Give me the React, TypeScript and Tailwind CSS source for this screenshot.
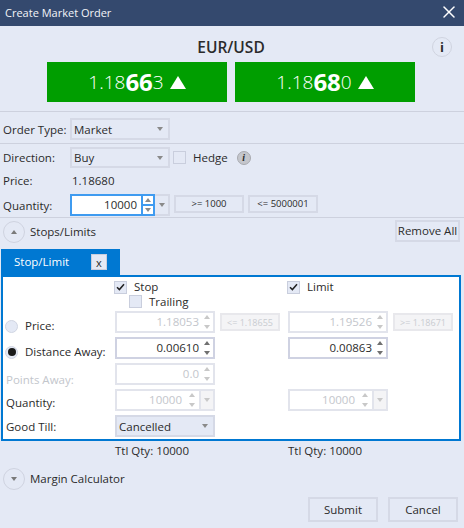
import React from 'react';
import { X } from 'lucide-react';

const Up = ({ className = 'border-b-[#8a8a8a]' }: { className?: string }) => (
  <span className={`block w-0 h-0 border-x-[3.5px] border-x-transparent border-b-[4px] ${className}`} />
);
const Down = ({ className = 'border-t-[#8a8a8a]' }: { className?: string }) => (
  <span className={`block w-0 h-0 border-x-[3.5px] border-x-transparent border-t-[4px] ${className}`} />
);

const Select = ({ value, height = 'h-[22px]' }: { value: string; height?: string }) => (
  <div className={`w-[100px] ${height} shrink-0 border-2 border-[#d5d9e6] flex items-center justify-between pl-[2px] pr-[5px] text-[#2b2b2b]`}>
    <span className="pt-[1px]">{value}</span>
    <Down className="border-t-[#8a8a8a]" />
  </div>
);

const Check = ({ on, className = '' }: { on?: boolean; className?: string }) => (
  <span className={`w-[13px] h-[13px] shrink-0 border border-[#c9cedd] bg-[#e4e9f5] flex items-center justify-center ${className}`}>
    {on && (
      <svg width="9" height="8" viewBox="0 0 9 8" fill="none">
        <path d="M1 4.2 L3.4 6.6 L8 1.2" stroke="#222" strokeWidth="1.5" />
      </svg>
    )}
  </span>
);

const Radio = ({ on }: { on?: boolean }) => (
  <span className="w-[13px] h-[13px] shrink-0 rounded-full border border-[#d0d5e2] bg-[#e4e9f5] flex items-center justify-center">
    {on && <span className="w-[8px] h-[8px] rounded-full bg-[#1a1a1a]" />}
  </span>
);

const Spin = ({ value, disabled }: { value: string; disabled?: boolean }) => (
  <div className={`w-[100px] h-[22px] shrink-0 border-2 flex items-center justify-end pr-[1px] gap-[5px] ${disabled ? 'border-[#e2e4ec] text-[#c3c6cc]' : 'border-[#cfd2e2] text-[#2b2b2b]'}`}>
    <span>{value}</span>
    <span className="flex flex-col gap-[6px] w-[8px]">
      <Up className={disabled ? 'border-b-[#c8c8c8]' : 'border-b-[#707070]'} />
      <Down className={disabled ? 'border-t-[#c8c8c8]' : 'border-t-[#707070]'} />
    </span>
  </div>
);

const QtySpin = () => (
  <div className="w-[100px] h-[22px] shrink-0 border-2 border-[#e2e4ec] flex text-[#c3c6cc]">
    <div className="w-[82px] flex items-center justify-end pr-[2px] gap-[7px]">
      <span>10000</span>
      <span className="flex flex-col gap-[6px] w-[8px]">
        <Up className="border-b-[#c8c8c8]" />
        <Down className="border-t-[#c8c8c8]" />
      </span>
    </div>
    <div className="flex-1 bg-[#f4f4f6] border-l-2 border-[#e2e4ec] flex items-center justify-center">
      <span className="block w-0 h-0 border-x-[3px] border-x-transparent border-t-[4px] border-t-[#c8c8c8]" />
    </div>
  </div>
);

const Limit = ({ text }: { text: string }) => (
  <div className="w-[60px] h-[18px] shrink-0 border-2 border-[#e8e8ec] bg-[#f4f4f6] text-[#c9ccd1] text-[9px] flex items-center justify-center whitespace-nowrap overflow-hidden">
    {text}
  </div>
);

const Round = ({ up }: { up?: boolean }) => (
  <span className="w-[22px] h-[22px] shrink-0 rounded-full border border-[#cfd3e0] flex items-center justify-center">
    {up ? <Up className="border-b-[#7a7a7a]" /> : <Down className="border-t-[#7a7a7a]" />}
  </span>
);

const Quote = ({ a, b, c }: { a: string; b: string; c: string }) => (
  <div className="w-[180px] h-[40px] bg-[#009e00] text-white flex items-center justify-center text-[19px] font-light">
    <span>{a}</span>
    <span className="font-bold text-[24px] leading-none">{b}</span>
    <span>{c}</span>
    <span className="ml-[6px] w-0 h-0 border-x-[8px] border-x-transparent border-b-[13px] border-b-white" />
  </div>
);

const App = () => {
  return (
    <div className="w-[464px] h-[528px] bg-[#e4e9f5] text-[#2b2b2b] text-[11.5px] leading-none overflow-hidden font-['Open_Sans','Noto_Sans',sans-serif]">
      {/* title */}
      <div className="h-[26px] bg-[#34496e] text-[#f2f4f8] flex items-center justify-between pl-[5px] pr-[5px] pb-[2px]">
        <span className="text-[11px]">Create Market Order</span>
        <X size={20} strokeWidth={1.8} className="text-white" />
      </div>

      {/* instrument */}
      <div className="h-[86px] border-b border-[#cdd1de] relative pt-[14px]">
        <div className="text-center text-[15.5px] font-semibold h-[22px] pr-[2px]">EUR/USD</div>
        <div className="flex gap-[8px] ml-[47px]">
          <Quote a="1.18" b="66" c="3" />
          <Quote a="1.18" b="68" c="0" />
        </div>
        <span className="absolute left-[432px] top-[11px] w-[20px] h-[20px] rounded-full border border-[#d0d4e0] flex items-center justify-center font-bold text-[13px]">i</span>
      </div>

      {/* order type */}
      <div className="h-[32px] border-b border-[#cdd1de] flex items-center pl-[3px] pt-[6px] pb-[3px]">
        <span className="w-[67px] pt-[1px]">Order Type:</span>
        <Select value="Market" />
      </div>

      {/* direction */}
      <div className="h-[74px] border-b border-[#cdd1de] pl-[3px] pt-[3px] flex flex-col">
        <div className="flex items-center h-[21px]">
          <span className="w-[67px] pt-[1px]">Direction:</span>
          <Select value="Buy" height="h-[21px]" />
          <Check className="ml-[3px] bg-transparent" />
          <span className="ml-[7px] pt-[1px]">Hedge</span>
          <span className="ml-[9px] w-[14px] h-[14px] rounded-full bg-[#c4c6cc] border border-[#a8aab0] flex items-center justify-center text-[10px] font-bold italic font-['Liberation_Serif',serif]">i</span>
        </div>
        <div className="flex items-center h-[26px]">
          <span className="w-[69px]">Price:</span>
          <span>1.18680</span>
        </div>
        <div className="flex items-start h-[22px]">
          <span className="w-[67px] pt-[6px]">Quantity:</span>
          <div className="w-[85px] h-[22px] border-2 border-[#3f9bf0] bg-white flex">
            <span className="flex-1 flex items-center justify-end pr-[4px]">10000</span>
            <span className="w-[12px] border-l-2 border-[#3f9bf0] flex flex-col">
              <span className="flex-1 border-b border-[#3f9bf0] flex items-center justify-center"><Up /></span>
              <span className="flex-1 border-t border-[#3f9bf0] flex items-center justify-center"><Down /></span>
            </span>
          </div>
          <span className="w-[15px] h-[22px] border-2 border-l-0 border-[#d5d9e6] flex items-center justify-center">
            <Down />
          </span>
          <span className="ml-[4px] mt-[1px] w-[70px] h-[18px] border-2 border-[#d5d9e6] text-[9.5px] flex items-center justify-center">&gt;= 1000</span>
          <span className="ml-[4px] mt-[1px] w-[70px] h-[18px] border-2 border-[#d5d9e6] text-[9.5px] flex items-center justify-center">&lt;= 5000001</span>
        </div>
      </div>

      {/* stops header */}
      <div className="h-[31px] flex items-start justify-between pl-[3px] pr-[4px] pt-[2px]">
        <div className="flex items-center gap-[5px] pt-[1px]">
          <Round up />
          <span>Stops/Limits</span>
        </div>
        <span className="w-[65px] h-[22px] border-2 border-[#d5d9e6] flex items-center justify-center whitespace-nowrap">Remove All</span>
      </div>

      {/* tab */}
      <div className="ml-[1px] w-[119px] h-[26px] bg-[#0078d2] text-white flex items-center pl-[13px]">
        <span className="w-[77px]">Stop/Limit</span>
        <span className="w-[16px] h-[16px] bg-[#e4e9f5] border border-[#c9cedd] text-[#2b2b2b] flex items-center justify-center text-[11px]">x</span>
      </div>

      {/* panel */}
      <div className="ml-[1px] w-[460px] h-[166px] border-2 border-[#0078d2] bg-white flex flex-col">
        <div className="flex h-[17px] items-center pt-[3px]">
          <div className="w-[111px]" />
          <Check on />
          <span className="ml-[7px] w-[153px]">Stop</span>
          <Check on />
          <span className="ml-[7px]">Limit</span>
        </div>
        <div className="flex h-[15px] items-center">
          <div className="w-[126px]" />
          <Check />
          <span className="ml-[7px]">Trailing</span>
        </div>
        <div className="flex h-[26px] items-center">
          <div className="w-[112px] flex items-center pl-[2px] gap-[7px] pt-[8px]"><Radio /><span>Price:</span></div>
          <Spin value="1.18053" disabled />
          <div className="ml-[5px]"><Limit text="<= 1.18655" /></div>
          <div className="ml-[8px]"><Spin value="1.19526" disabled /></div>
          <div className="ml-[5px]"><Limit text=">= 1.18671" /></div>
        </div>
        <div className="flex h-[26px] items-center">
          <div className="w-[112px] flex items-center pl-[2px] gap-[7px] pt-[8px]"><Radio on /><span>Distance Away:</span></div>
          <Spin value="0.00610" />
          <div className="ml-[73px]"><Spin value="0.00863" /></div>
        </div>
        <div className="flex h-[26px] items-center">
          <div className="w-[112px] pl-[3px] pt-[12px] text-[#c3c6cc]">Points Away:</div>
          <Spin value="0.0" disabled />
        </div>
        <div className="flex h-[26px] items-center">
          <div className="w-[112px] pl-[3px] pt-[6px]">Quantity:</div>
          <QtySpin />
          <div className="ml-[73px]"><QtySpin /></div>
        </div>
        <div className="flex h-[26px] items-center">
          <div className="w-[112px] pl-[3px] pt-[2px]">Good Till:</div>
          <div className="bg-[#e4e9f5]"><Select value="Cancelled" /></div>
        </div>
      </div>

      {/* totals */}
      <div className="flex h-[20px] items-center pl-[115px]">
        <span className="w-[173px]">Ttl Qty: 10000</span>
        <span>Ttl Qty: 10000</span>
      </div>

      <div className="flex items-center gap-[5px] pl-[3px] pt-[5px] h-[31px]">
        <Round />
        <span>Margin Calculator</span>
      </div>

      {/* footer */}
      <div className="flex justify-end gap-[10px] pr-[6px] pt-[5px]">
        <span className="w-[70px] h-[25px] border-2 border-[#d5d9e6] flex items-center justify-center">Submit</span>
        <span className="w-[70px] h-[25px] border-2 border-[#d5d9e6] flex items-center justify-center">Cancel</span>
      </div>
    </div>
  );
};

export default App;
